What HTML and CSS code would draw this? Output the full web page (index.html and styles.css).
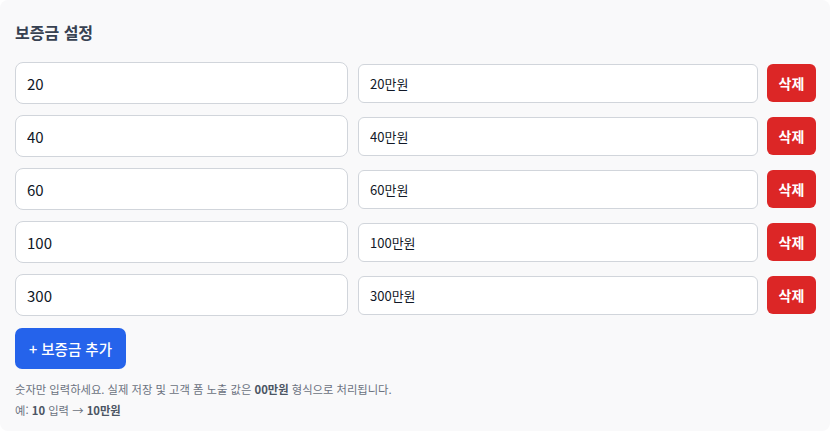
FILE: index.html
```html
<!DOCTYPE html>
<html lang="ko">
<head>
    <meta charset="UTF-8">
    <meta name="viewport" content="width=device-width, initial-scale=1.0">
    <title>보증금 설정</title>
    <link rel="stylesheet" href="styles.css">
</head>
<body>
    <div class="card">
        <h3 class="title">보증금 설정</h3>

        <div id="depositList" class="deposit-list">
            <div class="deposit-row">
                <input type="text" class="amount" value="20">
                <input type="text" class="label" value="20만원" readonly>
                <button class="btn-delete">삭제</button>
            </div>
            <div class="deposit-row">
                <input type="text" class="amount" value="40">
                <input type="text" class="label" value="40만원" readonly>
                <button class="btn-delete">삭제</button>
            </div>
            <div class="deposit-row">
                <input type="text" class="amount" value="60">
                <input type="text" class="label" value="60만원" readonly>
                <button class="btn-delete">삭제</button>
            </div>
            <div class="deposit-row">
                <input type="text" class="amount" value="100">
                <input type="text" class="label" value="100만원" readonly>
                <button class="btn-delete">삭제</button>
            </div>
            <div class="deposit-row">
                <input type="text" class="amount" value="300">
                <input type="text" class="label" value="300만원" readonly>
                <button class="btn-delete">삭제</button>
            </div>
        </div>

        <button class="btn-add">+ 보증금 추가</button>

        <p class="help">숫자만 입력하세요. 실제 저장 및 고객 폼 노출 값은 <b>00만원</b> 형식으로 처리됩니다.</p>
        <p class="help">예: <b>10</b> 입력 → <b>10만원</b></p>
    </div>
</body>
</html>
```

FILE: styles.css
```css
body {
    margin: 0;
    background: #fff;
    font-family: "Noto Sans CJK KR", "Noto Sans", sans-serif;
}
.card {
    background: #f9f9fa;
    border-radius: 8px;
    padding: 17px 14px 12px 15px;
    height: 431px;
    box-sizing: border-box;
}
.title {
    margin: 0 0 15px;
    font-size: 16px;
    font-weight: 700;
    line-height: 30px;
    color: #374151;
}
.deposit-list {
    display: flex;
    flex-direction: column;
    gap: 11px;
}
.deposit-row {
    display: grid;
    grid-template-columns: 333px 1fr 48px;
    column-gap: 10px;
    align-items: center;
}
input {
    font-family: inherit;
    background: #fff;
    border: 1px solid #d1d5db;
    box-sizing: border-box;
    color: #111827;
    outline: none;
}
.amount {
    height: 42px;
    padding: 0 11px;
    border-radius: 8px;
    font-size: 15px;
}
.label {
    height: 39px;
    padding: 0 11px;
    border-radius: 6px;
    font-size: 13px;
}
.btn-delete {
    margin-left: -1px;
    height: 38px;
    border: none;
    border-radius: 6px;
    background: #dc2626;
    color: #fff;
    font-family: inherit;
    font-size: 14px;
    font-weight: 700;
    padding: 0;
    cursor: pointer;
}
.btn-add {
    margin-top: 12px;
    width: 111px;
    height: 41px;
    border: none;
    border-radius: 7px;
    background: #2563eb;
    color: #fff;
    font-family: inherit;
    font-size: 14.5px;
    font-weight: 500;
    padding: 0;
    cursor: pointer;
}
.help {
    margin: 0;
    font-size: 11.3px;
    line-height: 21px;
    color: #6b7280;
}
.btn-add + .help {
    margin-top: 10px;
}
.help b {
    color: #4b5563;
}
```
